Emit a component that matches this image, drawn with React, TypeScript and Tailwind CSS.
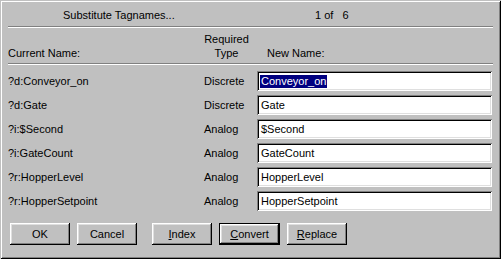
const rows = [
  { name: '?d:Conveyor_on', type: 'Discrete', value: 'Conveyor_on', selected: true },
  { name: '?d:Gate', type: 'Discrete', value: 'Gate' },
  { name: '?i:$Second', type: 'Analog', value: '$Second' },
  { name: '?i:GateCount', type: 'Analog', value: 'GateCount' },
  { name: '?r:HopperLevel', type: 'Analog', value: 'HopperLevel' },
  { name: '?r:HopperSetpoint', type: 'Analog', value: 'HopperSetpoint' },
];

const Separator = () => (
  <div className="h-0 border-t border-t-[#808080] border-b border-b-white" />
);

const Button = ({
  children,
  isDefault,
  className = '',
}: {
  children: React.ReactNode;
  isDefault?: boolean;
  className?: string;
}) => (
  <button
    className={
      'h-[22px] flex items-center justify-center bg-[#c0c0c0] ' +
      (isDefault
        ? 'w-[61px] shadow-[inset_0_0_0_1px_#000,inset_-2px_-2px_#000,inset_2px_2px_#fff,inset_-3px_-3px_#808080,inset_3px_3px_#dfdfdf] '
        : 'w-[60px] shadow-[inset_-1px_-1px_#000,inset_1px_1px_#fff,inset_-2px_-2px_#808080,inset_2px_2px_#dfdfdf] ') +
      className
    }
  >
    {children}
  </button>
);

export default function App() {
  return (
    <div className="w-[501px] h-[259px] bg-[#c0c0c0] text-black text-[11px] leading-[13px] font-['Liberation_Sans',Arial,sans-serif] flex flex-col px-[8px] shadow-[inset_1px_1px_#c0c0c0,inset_-1px_-1px_#000,inset_2px_2px_#fff,inset_-2px_-2px_#808080]">
      <div className="flex h-[26px] pt-[9px]">
        <span className="w-[307px] pl-[55px]">Substitute Tagnames...</span>
        <span className="whitespace-pre">1 of   6</span>
      </div>
      <Separator />
      <div className="flex items-end h-[35px] pb-[3px]">
        <span className="w-[196px]">Current Name:</span>
        <div className="w-[45px] text-center leading-[14px]">
          Required
          <br />
          Type
        </div>
        <span className="pl-[18px]">New Name:</span>
      </div>
      <Separator />
      <div className="flex flex-col gap-[4px] pt-[6px]">
        {rows.map((r) => (
          <div key={r.name} className="flex items-center h-[20px]">
            <span className="w-[196px]">{r.name}</span>
            <span className="w-[53px]">{r.type}</span>
            <div className="w-[235px] h-[20px] bg-white flex items-center pl-[3px] pt-[1px] shadow-[inset_1px_1px_#808080,inset_-1px_-1px_#fff,inset_2px_2px_#000,inset_-2px_-2px_#dfdfdf]">
              {r.selected ? (
                <span className="bg-[#000080] text-white px-[1px]">{r.value}</span>
              ) : (
                <span className="pl-[1px]">{r.value}</span>
              )}
            </div>
          </div>
        ))}
      </div>
      <div className="flex mt-[12px] ml-[2px]">
        <Button>OK</Button>
        <Button className="ml-[7px]">Cancel</Button>
        <Button className="ml-[15px]">
          <span>
            <u>I</u>ndex
          </span>
        </Button>
        <Button isDefault className="ml-[7px]">
          <span>
            <u>C</u>onvert
          </span>
        </Button>
        <Button className="ml-[7px]">
          <span>
            <u>R</u>eplace
          </span>
        </Button>
      </div>
    </div>
  );
}
